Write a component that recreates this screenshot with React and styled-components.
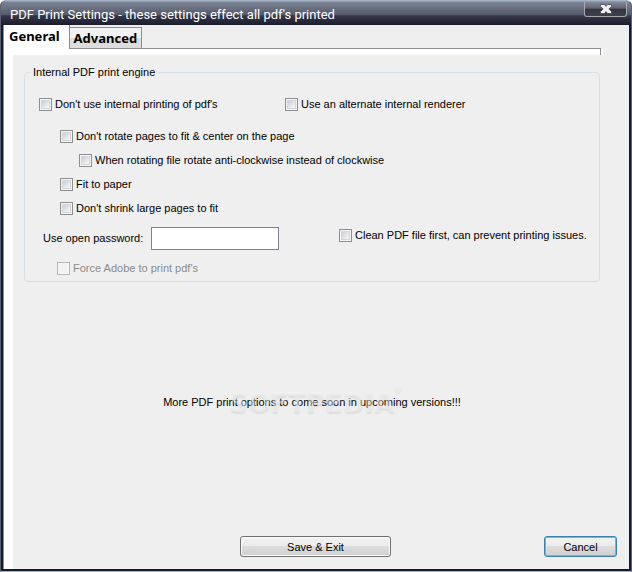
import React from "react";
import styled, { createGlobalStyle } from "styled-components";

const GlobalStyle = createGlobalStyle`
  * {
    box-sizing: border-box;
  }
  body {
    margin: 0;
    background: #ffffff;
    color: #000000;
    font-family: "Liberation Sans", Arial, sans-serif;
    font-size: 11px;
    line-height: 14px;
  }
`;

const Window = styled.div`
  display: flex;
  flex-direction: column;
  min-height: 100vh;
  border: 1px solid #a4b2c8;
  border-left-color: #596174;
  border-right-color: #596174;
  border-radius: 6px 6px 0 0;
  background: #161a2b;
  overflow: hidden;
`;

const TitleBar = styled.header`
  display: flex;
  justify-content: space-between;
  height: 24px;
  padding: 0 4px 0 9px;
  border-top: 1px solid #8aa2b0;
  background: linear-gradient(
    #7c8494 0%,
    #555a6b 55%,
    #363848 60%,
    #1c1d2c 100%
  );
`;

const Title = styled.h1`
  margin: 0;
  color: #ffffff;
  font-family: Roboto, "Noto Sans", sans-serif;
  font-size: 13px;
  font-weight: 400;
  line-height: 26px;
  white-space: nowrap;
`;

const CloseButton = styled.button`
  display: flex;
  align-items: center;
  justify-content: center;
  width: 43px;
  height: 15px;
  padding: 0;
  border: 1px solid #a5a8ad;
  border-top: 0;
  border-radius: 0 0 3px 3px;
  background: linear-gradient(#858b96 0%, #5f6470 45%, #333642 50%, #3e414d 100%);
`;

const Client = styled.main`
  display: flex;
  flex: 1;
  flex-direction: column;
  margin: 0 2px 2px;
  border-left: 1px solid #8f929c;
  background: #efefef;
`;

const TabBar = styled.div`
  display: flex;
  align-items: flex-end;
  height: 24px;
`;

const Tab = styled.button`
  height: ${(props) => (props.$active ? "24px" : "22px")};
  padding: ${(props) => (props.$active ? "0 9px 2px 5px" : "0 4px")};
  border: 1px solid #8c8e94;
  border-width: ${(props) => (props.$active ? "0 1px 0 0" : "1px 1px 1px 0")};
  background: ${(props) =>
    props.$active ? "#ffffff" : "linear-gradient(#f2f2f2 50%, #dddddd 50%)"};
  color: #000000;
  font-family: "Noto Sans", sans-serif;
  font-size: 13px;
  font-weight: 700;
  line-height: 20px;
`;

const TabLine = styled.div`
  flex: 1;
  height: 1px;
  margin-right: 28px;
  background: #8c8e94;
`;

const TabEdge = styled.div`
  height: 6px;
  margin-right: 26px;
  padding-right: 2px;
  background: #ffffff;

  &::before {
    content: "";
    display: block;
    height: 6px;
    border-right: 1px solid #8c8e94;
  }
`;

const Page = styled.form`
  display: flex;
  flex: 1;
  flex-direction: column;
  padding: 10px 11px 12px;
  border-left: 9px solid #ffffff;
`;

const Group = styled.fieldset`
  display: flex;
  flex-direction: column;
  min-width: 0;
  margin: 0 18px 0 0;
  padding: 13px 0 1px 14px;
  border: 1px solid #d5dfe5;
  border-radius: 4px;
`;

const Legend = styled.legend`
  margin-left: -9px;
  padding: 0 3px;
`;

const Row = styled.div`
  display: flex;
  align-items: center;
  height: 24px;
  margin-bottom: ${(props) => props.$gap || 0}px;
  padding-left: ${(props) => props.$indent || 0}px;
`;

const CheckLabel = styled.label`
  display: flex;
  align-items: center;
  align-self: ${(props) => (props.$raised ? "flex-start" : "center")};
  gap: 3px;
  height: 18px;
  color: ${(props) => (props.$disabled ? "#8b8b8b" : "#000000")};
  white-space: nowrap;
`;

const FirstColumn = styled.div`
  flex: 0 0 246px;
`;

const CheckBox = styled.input`
  appearance: none;
  width: 13px;
  height: 13px;
  margin: 0;
  border: 1px solid #8e8f8f;
  background: linear-gradient(135deg, #c9ced5 20%, #f6f6f6 75%);
  box-shadow: inset 0 0 0 1px #f4f4f4, inset 0 0 0 2px #d3d6da;

  &:disabled {
    border-color: #b5b5b5;
    background: #f2f2f2;
    box-shadow: inset 0 0 0 1px #f8f8f8;
  }
`;

const PasswordLabel = styled.label`
  flex: 0 0 108px;
`;

const PasswordInput = styled.input`
  width: 128px;
  height: 23px;
  margin-right: 60px;
  padding: 2px 4px;
  border: 1px solid #7d828c;
  background: #ffffff;
  font: inherit;
`;

const Notice = styled.p`
  position: relative;
  margin: 113px 18px auto 0;
  text-align: center;
`;

const Watermark = styled.span`
  position: absolute;
  top: -7px;
  left: 50%;
  transform: translateX(-50%);
  color: rgba(246, 246, 246, 0.45);
  font-family: "DejaVu Sans", sans-serif;
  font-size: 26px;
  font-weight: 700;
  line-height: 30px;
  text-shadow: 0 2px 2px rgba(0, 0, 0, 0.08);
  pointer-events: none;

  sup {
    position: absolute;
    top: -6px;
    font-size: 8px;
    line-height: 16px;
  }
`;

const Footer = styled.footer`
  display: grid;
  grid-template-columns: 1fr 151px 1fr;
  margin-left: -10px;
  padding-right: 1px;
`;

const Button = styled.button`
  grid-column: ${(props) => (props.$primary ? 3 : 2)};
  width: ${(props) => (props.$primary ? "73px" : "100%")};
  height: 21px;
  justify-self: end;
  padding: 0;
  border: 1px solid ${(props) => (props.$primary ? "#3c7fb1" : "#707070")};
  border-radius: 3px;
  background: linear-gradient(#f2f2f2 0%, #ebebeb 50%, #dddddd 50%, #cfcfcf 100%);
  box-shadow: inset 0 0 0 1px
    ${(props) => (props.$primary ? "#48c8f0" : "#fafafa")};
  color: #000000;
  font: inherit;
`;

const Check = ({ label, disabled, raised }) => (
  <CheckLabel $disabled={disabled} $raised={raised}>
    <CheckBox type="checkbox" disabled={disabled} />
    {label}
  </CheckLabel>
);

const CloseIcon = () => (
  <svg width="14" height="10" viewBox="0 0 14 10" aria-hidden="true">
    <path
      d="M1.5 0.5h4L7 2.4 8.5 0.5h4v2L9.8 5l2.7 2.5v2h-4L7 7.6 5.5 9.5h-4v-2L4.2 5 1.5 2.5z"
      fill="#f3f3f3"
      stroke="#454958"
      strokeWidth="0.8"
    />
  </svg>
);

const App = () => (
  <>
    <GlobalStyle />
    <Window>
      <TitleBar>
        <Title>
          PDF Print Settings - these settings effect all pdf's printed
        </Title>
        <CloseButton type="button" aria-label="Close">
          <CloseIcon />
        </CloseButton>
      </TitleBar>
      <Client>
        <TabBar>
          <Tab type="button" $active>
            General
          </Tab>
          <Tab type="button">Advanced</Tab>
          <TabLine />
        </TabBar>
        <TabEdge />
        <Page>
          <Group>
            <Legend>Internal PDF print engine</Legend>
            <Row $gap={8}>
              <FirstColumn>
                <Check label="Don't use internal printing of pdf's" />
              </FirstColumn>
              <Check label="Use an alternate internal renderer" />
            </Row>
            <Row $indent={21}>
              <Check label="Don't rotate pages to fit &amp; center on the page" />
            </Row>
            <Row $indent={40}>
              <Check label="When rotating file rotate anti-clockwise instead of clockwise" />
            </Row>
            <Row $indent={21}>
              <Check label="Fit to paper" />
            </Row>
            <Row $indent={21} $gap={6}>
              <Check label="Don't shrink large pages to fit" />
            </Row>
            <Row $indent={4} $gap={6}>
              <PasswordLabel htmlFor="password">
                Use open password:
              </PasswordLabel>
              <PasswordInput id="password" type="password" />
              <Check
                label="Clean PDF file first, can prevent printing issues."
                raised
              />
            </Row>
            <Row $indent={18}>
              <Check label="Force Adobe to print pdf's" disabled />
            </Row>
          </Group>
          <Notice>
            More PDF print options to come soon in upcoming versions!!!
            <Watermark aria-hidden="true">
              SOFTPEDIA<sup>®</sup>
            </Watermark>
          </Notice>
          <Footer>
            <Button type="button">Save &amp; Exit</Button>
            <Button type="button" $primary>
              Cancel
            </Button>
          </Footer>
        </Page>
      </Client>
    </Window>
  </>
);

export default App;
